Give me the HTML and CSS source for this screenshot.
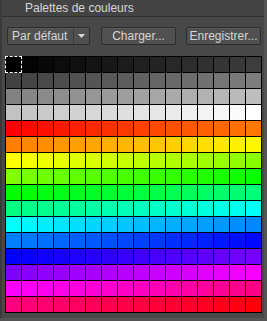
FILE: index.html
```html
<!DOCTYPE html>
<html lang="fr">
<head>
    <meta charset="UTF-8">
    <title>Palettes de couleurs</title>
    <link rel="stylesheet" href="styles.css">
</head>
<body>

<div class="panel">
    <div class="panel-title">Palettes de couleurs</div>

    <div class="toolbar">
        <div class="combo">
            <span class="combo-text">Par défaut</span>
            <span class="combo-arrow"><svg width="7" height="4" viewBox="0 0 7 4"><path d="M0 0H7L3.5 4Z" fill="#d8d8d8"/></svg></span>
        </div>
        <button class="btn btn-load">Charger...</button>
        <button class="btn btn-save">Enregistrer...</button>
    </div>

    <div class="swatches" id="swatches"></div>
</div>

<script>
    const grid = document.getElementById('swatches');

    // 4 rows of grays, then 12 rows of hues
    for (let i = 0; i < 256; i++) {
        const cell = document.createElement('div');
        cell.className = 'swatch';
        if (i < 64) {
            const g = Math.round(i * 255 / 63);
            cell.style.background = 'rgb(' + g + ',' + g + ',' + g + ')';
        } else {
            const hue = (i - 64) * 360 / 192;
            cell.style.background = 'hsl(' + hue + ',100%,50%)';
        }
        if (i === 0) cell.classList.add('selected');
        grid.appendChild(cell);
    }
</script>

</body>
</html>
```

FILE: styles.css
```css
body { margin: 0; background: #545454; font-family: "Liberation Sans", Arial, sans-serif; font-size: 12px; color: #d6d6d6; }
.panel { width: 262px; height: 318px; background: #484848; border-left: 2px solid #3a3a3a; }
.panel-title { height: 16px; line-height: 16px; padding-left: 23px; background: #434343; border-bottom: 1px solid #2f2f2f; color: #d8d8d8; }
.toolbar { display: flex; align-items: center; height: 18px; margin: 10px 0 11px 5px; }
.combo { display: flex; width: 81px; height: 16px; border: 1px solid #2c2c2c; border-radius: 2px; background: #505050; box-shadow: inset 0 1px 0 #5a5a5a; }
.combo-text { flex: 1; line-height: 16px; padding-left: 4px; }
.combo-arrow { width: 15px; display: flex; align-items: center; justify-content: center; border-left: 1px solid #3a3a3a; }
.btn { height: 18px; padding: 0; border: 1px solid #2c2c2c; border-radius: 2px; background: #505050; box-shadow: inset 0 1px 0 #5a5a5a; color: #d6d6d6; font-family: inherit; font-size: 12px; }
.btn-load { width: 75px; margin-left: 11px; }
.btn-save { width: 75px; margin-left: 10px; }
.swatches { display: grid; grid-template-columns: repeat(16, 15px); grid-auto-rows: 15px; gap: 1px; padding: 1px; width: max-content; margin-left: 3px; background: #000; }
.swatch { position: relative; }
.swatch.selected { outline: 1px dashed #fff; outline-offset: 0; z-index: 1; }
```
